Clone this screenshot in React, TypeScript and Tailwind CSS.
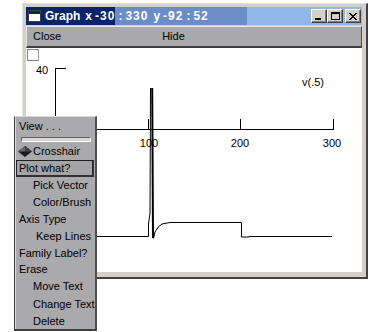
import React from "react";

const font = { fontFamily: '"Liberation Sans", Arial, sans-serif' };

function TitleButton({ children, className = "" }: { children: React.ReactNode; className?: string }) {
  return (
    <div
      className={`w-[16px] h-[14px] bg-[#d4d0c8] border-t border-l border-white border-r border-b border-r-[#404040] border-b-[#404040] shadow-[inset_-1px_-1px_0_#808080] flex items-center justify-center ${className}`}
    >
      {children}
    </div>
  );
}

function MenuItem({ label, indent = 0, h }: { label: string; indent?: number; h: number }) {
  return (
    <div className="flex items-center text-[11px] text-black leading-none whitespace-nowrap" style={{ height: h, paddingLeft: indent }}>
      {label}
    </div>
  );
}

export default function App() {
  return (
    <div className="relative w-[377px] h-[332px] bg-white overflow-hidden" style={font}>
      {/* Window */}
      <div className="ml-[22px] pt-[3px]">
        <div className="w-[346px] h-[276px] bg-[#d4d0c8] border-t border-l border-[#e4e2dc] border-r-2 border-b-2 border-r-[#404048] border-b-[#404048] pt-[3px] pl-[3px] pr-[4px] flex flex-col">
          {/* Title bar */}
          <div className="h-[18px] flex items-center bg-[linear-gradient(to_right,#0a246a_0%,#0a246a_26.5%,#6b8cc6_26.5%,#6b8cc6_65.8%,#90b6e7_65.8%,#90b6e7_100%)]">
            <div className="ml-[2px] w-[13px] h-[12px] bg-white border border-[#404040] flex flex-col">
              <div className="h-[3px] bg-[#0a246a]" />
            </div>
            <div className="ml-[4px] flex items-center text-white font-bold text-[12px] leading-none whitespace-nowrap">
              <span>Graph</span>
              <span className="ml-[5px]">x</span>
              <span className="ml-[3px] tracking-[1px]">-30</span>
              <span className="ml-[3px]">:</span>
              <span className="ml-[3px] tracking-[1px]">330</span>
              <span className="ml-[5px]">y</span>
              <span className="ml-[3px] tracking-[1px]">-92</span>
              <span className="ml-[3px]">:</span>
              <span className="ml-[3px] tracking-[1px]">52</span>
            </div>
            <div className="ml-auto mr-[1px] flex items-center">
              <TitleButton>
                <div className="w-[6px] h-[2px] bg-black mt-[6px] -ml-[2px]" />
              </TitleButton>
              <TitleButton>
                <div className="w-[9px] h-[8px] border border-black border-t-2" />
              </TitleButton>
              <TitleButton className="ml-[2px]">
                <svg width="8" height="7" viewBox="0 0 8 7" shapeRendering="crispEdges">
                  <path d="M0 0h2v1h-2zM6 0h2v1h-2zM1 1h2v1h-2zM5 1h2v1h-2zM2 2h4v1h-4zM3 3h2v1h-2zM2 4h4v1h-4zM1 5h2v1h-2zM5 5h2v1h-2zM0 6h2v1h-2zM6 6h2v1h-2z" fill="#000" />
                </svg>
              </TitleButton>
            </div>
          </div>
          {/* Menu bar */}
          <div className="mt-[1px] h-[22px] bg-[#a9a8aa] border-t border-l border-[#e6e6e6] border-r border-b-2 border-r-[#505050] border-b-[#3c3c3c] flex items-center text-[11px] text-black leading-none">
            <span className="ml-[6px]">Close</span>
            <span className="ml-[101px]">Hide</span>
          </div>
          {/* Plot area */}
          <div className="relative h-[224px] bg-white">
            <div className="ml-[1px] mt-[1px] w-[12px] h-[12px] border border-[#808080] border-r-[#a0a0a0] bg-white" />
            <svg className="absolute inset-0" width="336" height="224" viewBox="26 48 336 224" style={font}>
              <g stroke="#000" fill="none" strokeWidth="1" shapeRendering="crispEdges">
                <path d="M55.5 68.5 H65.5 M55.5 68 V129.5 M55 129.5 H333.5" />
                <path d="M148.5 119 V129 M240.5 119 V129 M333.5 119 V129" />
              </g>
              <g stroke="#000" fill="none" strokeWidth="1">
                <path d="M55 236.5 H148.5 V224 L150 213 L150.5 88" />
                <path d="M152.2 88 L153 238" strokeWidth="2" />
                <path d="M153.5 238.5 L155 232 Q158 226 162 224 L170 222.5 H241.5 V237 H249 V236.5 H332" />
              </g>
              <g fontSize="11" fill="#000">
                <text x="36" y="74">40</text>
                <text x="149" y="147" textAnchor="middle">100</text>
                <text x="240" y="147" textAnchor="middle">200</text>
                <text x="332" y="147" textAnchor="middle">300</text>
                <text x="302" y="86">v(.5)</text>
              </g>
            </svg>
          </div>
        </div>
      </div>

      {/* Popup menu */}
      <div className="absolute left-[14px] top-[116px] w-[83px] bg-[#aaa9ab] border-t border-t-[#d8d8d8] border-l border-l-[#404040] border-r-2 border-r-[#505050] border-b-2 border-b-[#404040] shadow-[inset_1px_0_0_#d8d8d8] pl-[1px]">
        <MenuItem label="View . . ." indent={3} h={18} />
        <div className="h-[8px] flex items-center pl-[5px] pr-[4px]">
          <div className="w-full h-[5px] bg-[#d6d6d6] border-t border-l border-[#606060] border-b border-b-white border-r border-r-white" />
        </div>
        <div className="flex items-center h-[17px] text-[11px] leading-none whitespace-nowrap">
          <svg width="15" height="11" viewBox="0 0 15 11" className="ml-[2px]">
            <polygon points="0,5.5 7,0 14,5.5 7,11" fill="#1a1a1a" />
            <polygon points="0,5.5 7,0 7,5.5" fill="#6a6a6a" />
            <polygon points="7,0 14,5.5 7,5.5" fill="#404040" />
          </svg>
          <span className="ml-[0px]">Crosshair</span>
        </div>
        <div className="h-[17px] flex items-center pr-[1px]">
          <div className="w-full h-[17px] border-t border-l border-[#202020] border-r-2 border-b-2 border-r-[#303030] border-b-[#303030] bg-[#a4a3a5] flex items-center text-[11px] leading-none whitespace-nowrap pl-[2px]">
            Plot what?
          </div>
        </div>
        <MenuItem label="Pick Vector" indent={17} h={17} />
        <MenuItem label="Color/Brush" indent={17} h={17} />
        <MenuItem label="Axis Type" indent={3} h={17} />
        <MenuItem label="Keep Lines" indent={20} h={17} />
        <MenuItem label="Family Label?" indent={3} h={16} />
        <MenuItem label="Erase" indent={3} h={16} />
        <MenuItem label="Move Text" indent={17} h={18} />
        <MenuItem label="Change Text" indent={17} h={18} />
        <MenuItem label="Delete" indent={17} h={16} />
      </div>
    </div>
  );
}
